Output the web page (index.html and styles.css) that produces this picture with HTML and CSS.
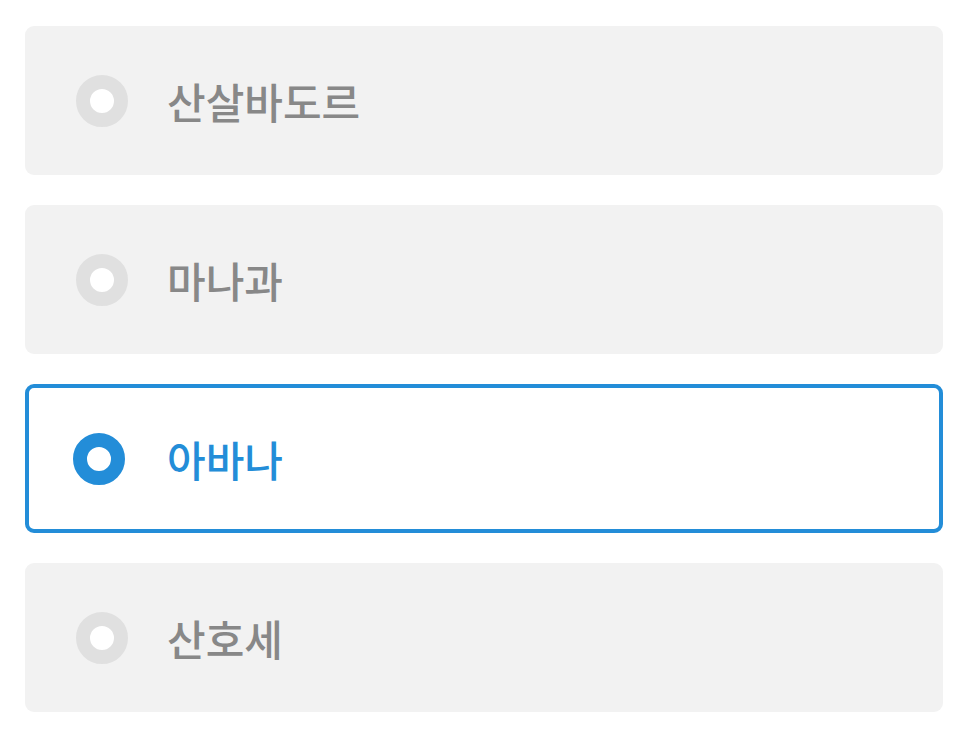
FILE: index.html
```html
<!DOCTYPE html>
<html lang="ko">
<head>
<meta charset="utf-8">
<title>Quiz</title>
<link rel="stylesheet" href="styles.css">
</head>
<body>
<div class="options">
    <label class="option">
        <span class="radio"></span>
        <span class="option-text">산살바도르</span>
    </label>
    <label class="option">
        <span class="radio"></span>
        <span class="option-text">마나과</span>
    </label>
    <label class="option selected">
        <span class="radio"></span>
        <span class="option-text">아바나</span>
    </label>
    <label class="option">
        <span class="radio"></span>
        <span class="option-text">산호세</span>
    </label>
</div>
</body>
</html>
```

FILE: styles.css
```css
body {
  margin: 0;
  background: #fff;
  font-family: "Noto Sans CJK KR", "Noto Sans", sans-serif;
}
.options {
  display: flex;
  flex-direction: column;
  gap: 30px;
  padding: 26px 34px 0 25px;
}
.option {
  display: flex;
  align-items: center;
  height: 149px;
  box-sizing: border-box;
  padding-left: 50px;
  background: #f2f2f2;
  border: 4px solid transparent;
  border-radius: 9px;
  cursor: pointer;
}
.radio {
  width: 24px;
  height: 24px;
  border: 14px solid #e0e0e0;
  border-radius: 50%;
  background: #fff;
  flex-shrink: 0;
  margin-left: -3px;
}
.option-text {
  margin-left: 39px;
  font-size: 42px;
  font-weight: 500;
  color: #888;
}
.option.selected {
  background: #fff;
  border-color: #238dd8;
}
.option.selected .radio {
  border-color: #238dd8;
  margin-left: -6px;
}
.option.selected .option-text {
  color: #238dd8;
  margin-left: 42px;
}
```
